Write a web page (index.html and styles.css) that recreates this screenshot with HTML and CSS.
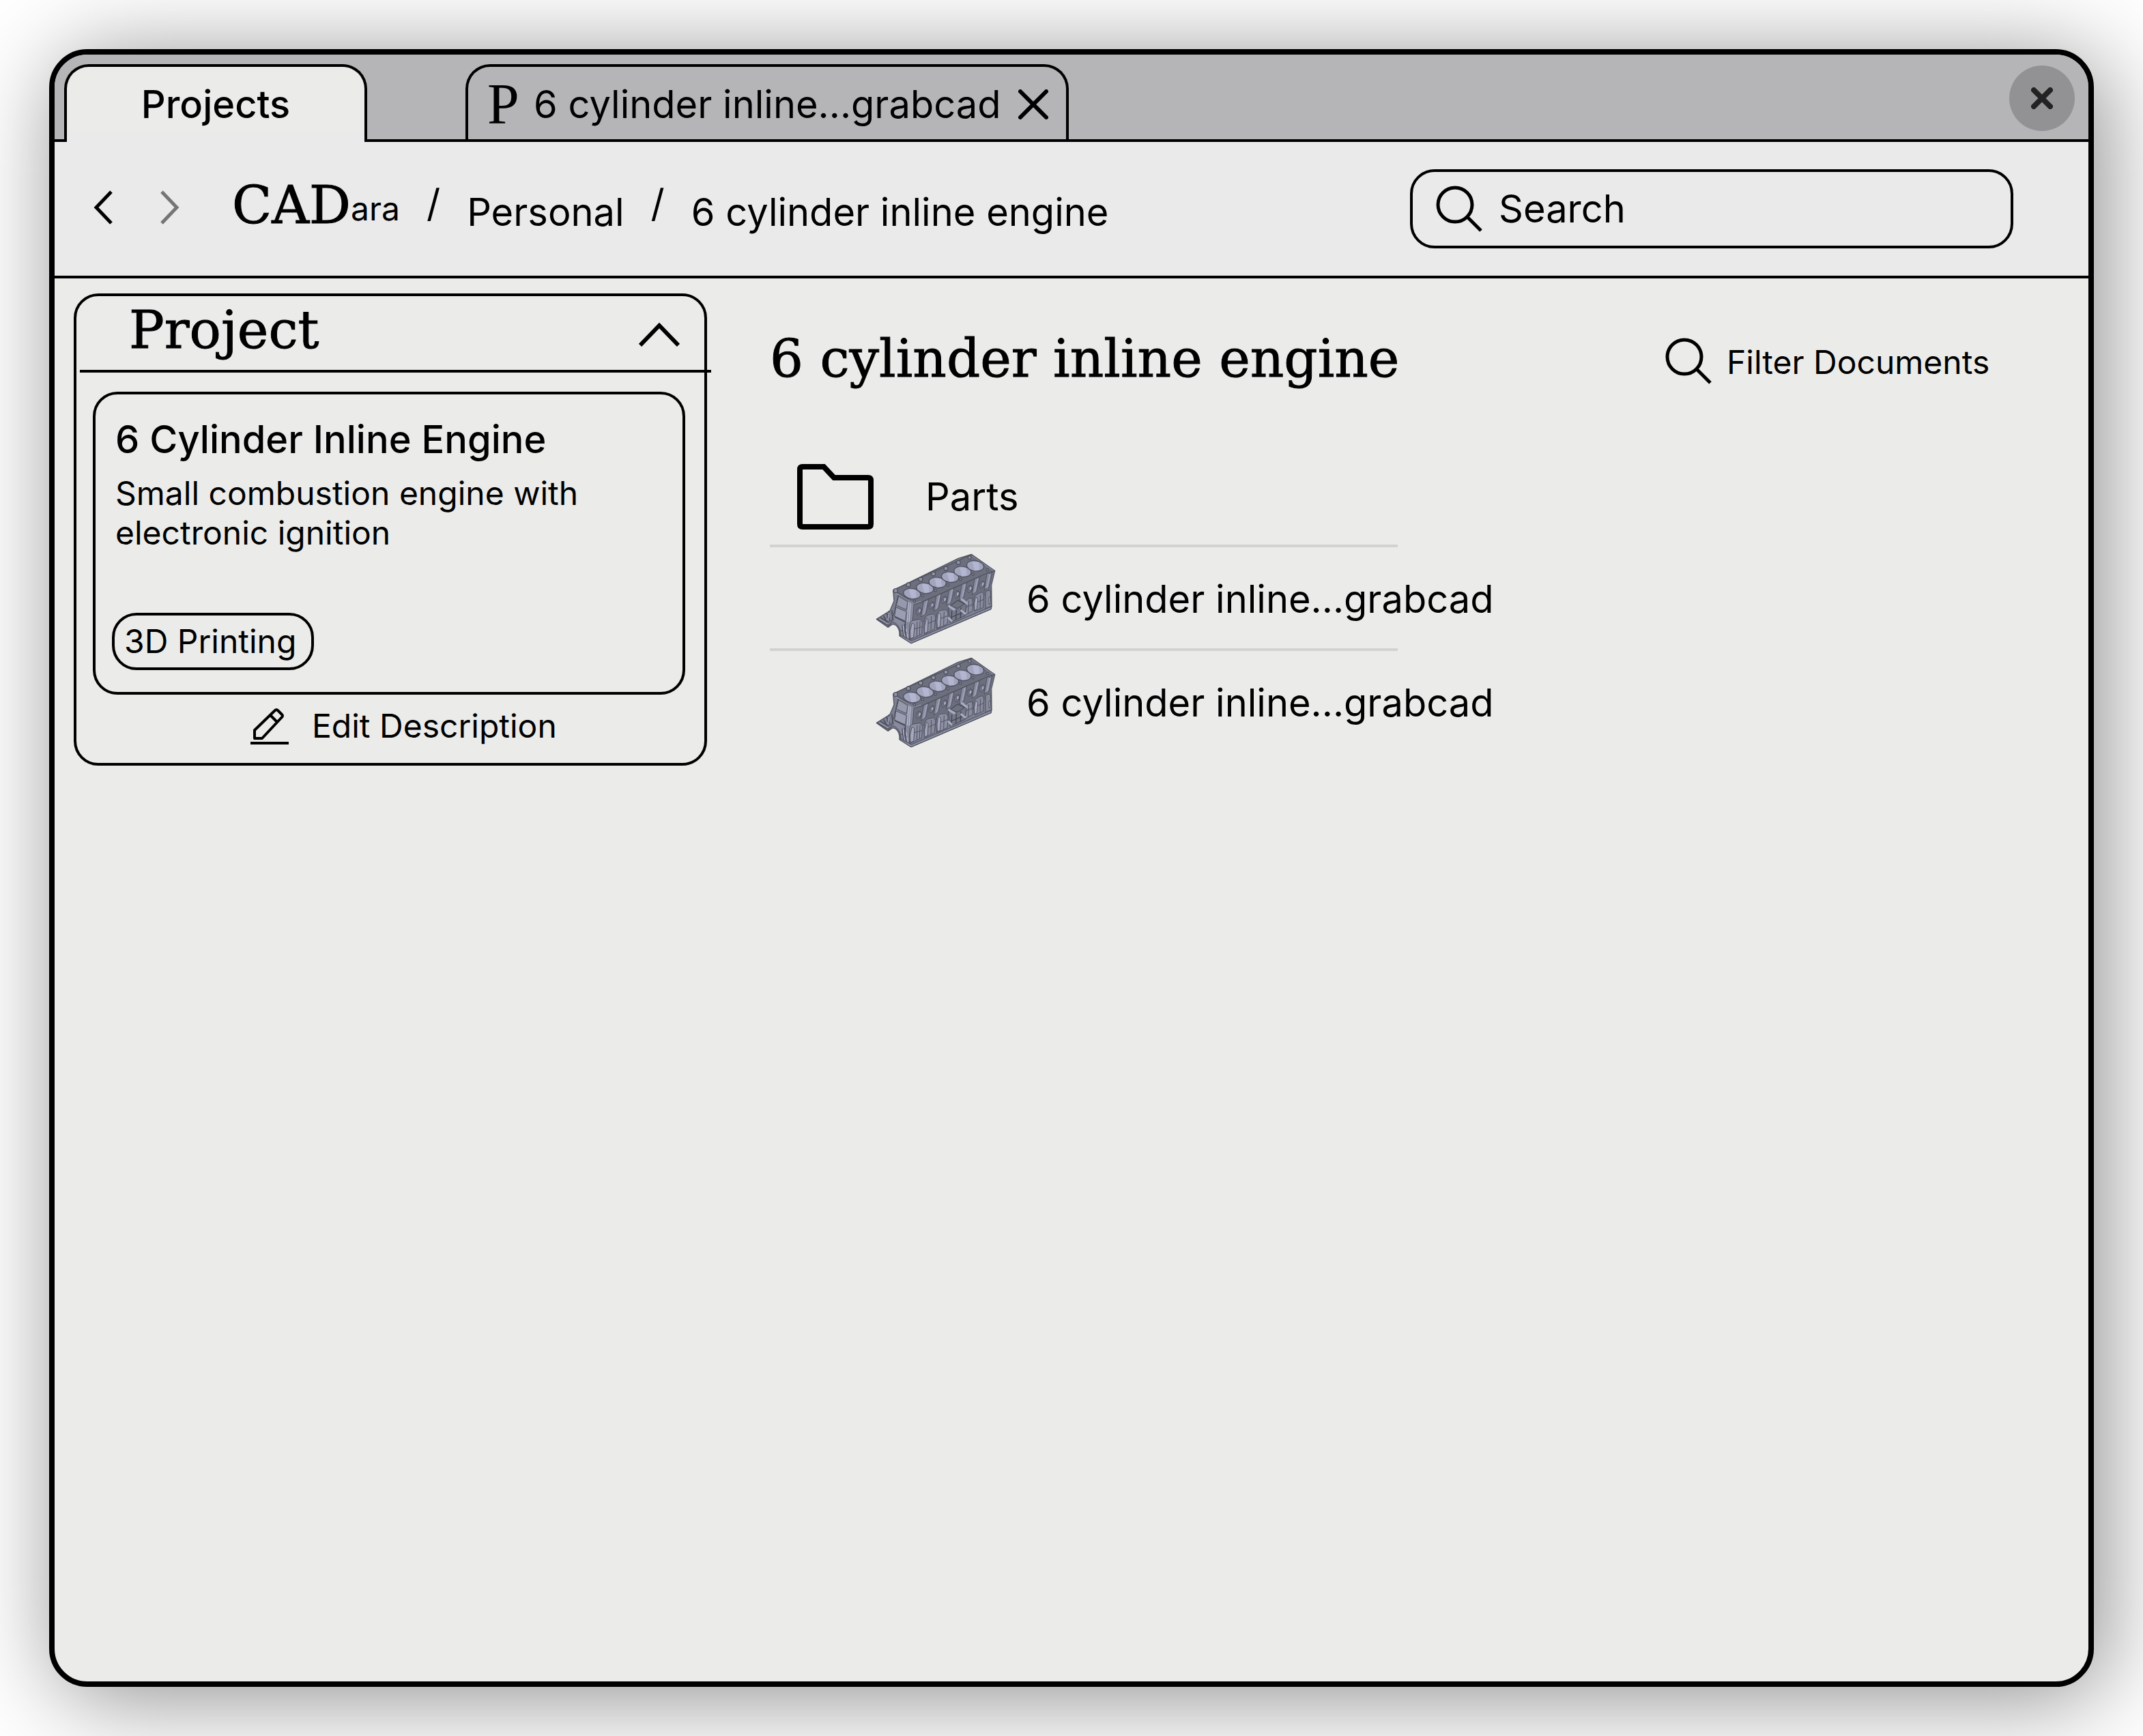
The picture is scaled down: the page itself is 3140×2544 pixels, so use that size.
FILE: index.html
```html
<!DOCTYPE html>
<html lang="en">
<head>
<meta charset="utf-8">
<meta name="viewport" content="width=device-width, initial-scale=1">
<title>CADara – 6 cylinder inline engine</title>
<link rel="stylesheet" href="styles.css">
</head>
<body>
<svg class="defs" aria-hidden="true">
  <symbol id="magnifier" viewBox="0 0 68 68">
    <circle cx="28" cy="28" r="25" fill="none" stroke="currentColor" stroke-width="5"/>
    <path d="M46 46L66 66" fill="none" stroke="currentColor" stroke-width="5"/>
  </symbol>
  <symbol id="engine" viewBox="66 66 534 402">
    <!-- body -->
    <path d="M73 355L132 318L150 275L146 228L432 88L490 70L593 143L578 205L579 300L574 312L225 461L174 428C176 396 160 376 142 378L124 391Z" fill="#7d8092" stroke="#50525f" stroke-width="4" stroke-linejoin="round"/>
    <!-- front face -->
    <path d="M168 248L238 286L232 360L215 452L180 425C180 392 160 366 138 368L152 320Z" fill="#888b9e" stroke="#484a57" stroke-width="3"/>
    <path d="M170 254L210 278L205 314L160 294Z" fill="#9699ac" stroke="#484a57" stroke-width="3"/>
    <path d="M158 302L205 322L200 364L152 342Z" fill="#9b9eb2" stroke="#484a57" stroke-width="3"/>
    <path d="M214 280L208 366M222 284L216 368" fill="none" stroke="#b9bcd2" stroke-width="4"/>
    <path d="M152 345L200 368L196 430" fill="none" stroke="#42444f" stroke-width="4"/>
    <path d="M78 355L126 383L138 372M90 348L128 370M104 340L118 368M116 328L134 366M128 318L120 350M140 316L146 362" fill="none" stroke="#4c4e5c" stroke-width="5"/>
    <path d="M84 354L124 378M126 326L124 360" fill="none" stroke="#b0b3c8" stroke-width="3"/>
    <path d="M186 380L192 436M196 376L204 440M182 404L210 418" stroke="#484a57" stroke-width="4"/>
    <path d="M190 384L196 430M204 398L210 436" stroke="#b4b7ce" stroke-width="4"/>
    <!-- base rail -->
    <path d="M176 424L226 450L576 300L578 310L225 461L176 430Z" fill="#8a8da1" stroke="#484a57" stroke-width="3"/>
    <!-- shaded band under the deck -->
    <path d="M240 290L592 144L578 205L576 240L232 390Z" fill="#6c6f7e"/>
    <!-- lower pods -->
    <g stroke="#50525f" stroke-width="3">
      <path d="M220 374Q222 362 236 360L262 356Q272 358 274 370L272 420L222 445Q214 420 220 374Z" fill="#8d90a3"/>
      <path d="M228 374Q238 372 240 384L236 434L222 442Q216 410 228 374Z" fill="#a6a9be"/>
      <path d="M252 366L250 430M264 364L262 424M240 398L274 388" fill="none"/>
      <path d="M284 356Q290 338 304 336L322 332Q332 336 332 350L328 398L284 420Q278 390 284 356Z" fill="#888b9e"/>
      <path d="M292 352Q300 350 300 362L298 410L284 418Q280 386 292 352Z" fill="#a3a6bb"/>
      <path d="M314 342L312 404M300 374L332 360" fill="none"/>
      <path d="M338 332Q342 318 358 316L376 314Q388 320 387 332L384 376L338 398Q332 370 338 332Z" fill="#8d90a3"/>
      <path d="M344 328Q354 326 356 340L352 388L340 394Q336 360 344 328Z" fill="#a6a9be"/>
      <path d="M370 322L368 382M356 352L386 340" fill="none"/>
      <path d="M462 284Q466 270 480 264L494 262L496 318L462 338Z" fill="#888b9e"/>
      <path d="M478 274L476 330M462 304L496 290" fill="none"/>
      <path d="M502 262Q506 248 522 242L536 236Q546 240 545 252L542 304L504 320Q496 290 502 262Z" fill="#888b9e"/>
      <path d="M508 260Q516 256 518 268L514 312L504 318Q500 284 508 260Z" fill="#a9acc1"/>
      <path d="M530 250L528 308M518 280L544 268" fill="none"/>
      <path d="M552 236Q564 224 574 232L577 298L552 308Z" fill="#868999"/>
      <path d="M566 262L572 256L574 284L568 290Z" fill="#b4b7ce"/>
    </g>
    <!-- diagonal ribs with their ports -->
    <g stroke="#50525f" stroke-width="3">
      <g id="rib">
        <path d="M282 264L304 258L290 330L268 346Z" fill="#888b9f"/>
        <path d="M296 266L280 336" stroke="#a5a8be" stroke-width="4"/>
        <circle cx="292" cy="264" r="8" fill="#9fa2b7"/>
        <ellipse cx="259" cy="320" rx="11" ry="16" transform="rotate(20 259 320)" fill="#777a8b"/>
        <ellipse cx="262" cy="318" rx="6" ry="10" transform="rotate(20 262 318)" fill="#a9acc2"/>
      </g>
      <use href="#rib" x="56" y="-25"/>
      <use href="#rib" x="112" y="-50"/>
      <use href="#rib" x="168" y="-74"/>
      <use href="#rib" x="224" y="-98"/>
      <use href="#rib" x="278" y="-117"/>
    </g>
    <!-- mount bracket -->
    <path d="M388 302L430 272L468 290L462 340L396 370Z" fill="#747788" stroke="#484a57" stroke-width="3"/>
    <path d="M398 296L430 273L460 288L428 308Z" fill="#6f7280" stroke="#42444f" stroke-width="3"/>
    <path d="M404 318L402 366M424 314L422 358M444 304L442 350M398 348L462 322" stroke="#42444f" stroke-width="4"/>
    <path d="M392 298L414 312M448 268L470 286M446 318L462 330M390 350L402 362" stroke="#a9acc2" stroke-width="10" stroke-linecap="round"/>
    <!-- deck -->
    <path d="M148 226L206 200L432 98L488 71L592 143L562 152L272 280L242 288Z" fill="#6c6f7d" stroke="#50525f" stroke-width="4" stroke-linejoin="round"/>
    <path d="M156 240L240 286L270 276" fill="none" stroke="#a2a5b8" stroke-width="3"/>
    <path d="M492 76L588 142" fill="none" stroke="#9699ab" stroke-width="3"/>
    <g fill="#9194a7" stroke="#50525f" stroke-width="4">
      <circle cx="157" cy="230" r="9"/><circle cx="213" cy="204" r="9"/><circle cx="267" cy="180" r="9"/>
      <circle cx="323" cy="156" r="9"/><circle cx="378" cy="132" r="9"/><circle cx="433" cy="106" r="9"/>
      <circle cx="482" cy="84" r="7"/>
      <circle cx="240" cy="276" r="5"/><circle cx="276" cy="252" r="5"/><circle cx="332" cy="229" r="5"/>
      <circle cx="387" cy="205" r="5"/><circle cx="442" cy="181" r="5"/><circle cx="497" cy="157" r="5"/><circle cx="560" cy="138" r="5"/>
    </g>
    <g fill="#a2a5bd" stroke="#50525f" stroke-width="4">
      <ellipse cx="229" cy="243" rx="38" ry="23" transform="rotate(8 229 243)"/>
      <ellipse cx="286" cy="219" rx="38" ry="23" transform="rotate(8 286 219)"/>
      <ellipse cx="341" cy="194" rx="38" ry="23" transform="rotate(8 341 194)"/>
      <ellipse cx="396" cy="170" rx="38" ry="23" transform="rotate(8 396 170)"/>
      <ellipse cx="451" cy="146" rx="38" ry="23" transform="rotate(8 451 146)"/>
      <ellipse cx="507" cy="121" rx="38" ry="23" transform="rotate(8 507 121)"/>
    </g>
    <g fill="#b3b6d0">
      <path d="M216 224L244 226L248 260L226 264Z"/><path d="M273 200L301 202L305 236L283 240Z"/>
      <path d="M328 175L356 177L360 211L338 215Z"/><path d="M383 151L411 153L415 187L393 191Z"/>
      <path d="M438 127L466 129L470 163L448 167Z"/><path d="M494 102L522 104L526 138L504 142Z"/>
    </g>
  </symbol>
</svg>

<div class="window">
  <header class="tab-bar">
    <div class="tab tab-active">
      <button class="tab-label" type="button">Projects</button>
    </div>
    <div class="tab tab-document">
      <span class="tab-badge">P</span>
      <button class="tab-label" type="button">6 cylinder inline...grabcad</button>
      <button class="tab-close" type="button" aria-label="Close tab">
        <svg width="44" height="44" viewBox="0 0 44 44"><path d="M3 3L41 41M41 3L3 41" stroke="currentColor" stroke-width="6" stroke-linecap="round"/></svg>
      </button>
    </div>
    <button class="window-close" type="button" aria-label="Close window">
      <svg width="32" height="32" viewBox="0 0 32 32"><path d="M4 4L28 28M28 4L4 28" stroke="currentColor" stroke-width="8" stroke-linecap="round"/></svg>
    </button>
  </header>

  <nav class="nav-bar">
    <div class="history">
      <button class="history-button" type="button" aria-label="Back">
        <svg width="48" height="52" viewBox="0 0 48 52"><path d="M35 3L13 26L35 49" fill="none" stroke="currentColor" stroke-width="5"/></svg>
      </button>
      <button class="history-button history-forward" type="button" aria-label="Forward">
        <svg width="48" height="52" viewBox="0 0 48 52"><path d="M13 3L35 26L13 49" fill="none" stroke="currentColor" stroke-width="5"/></svg>
      </button>
    </div>
    <div class="breadcrumb">
      <a class="brand" href="#"><span class="brand-main">CAD</span><span class="brand-suffix">ara</span></a>
      <span class="separator">/</span>
      <a class="crumb" href="#">Personal</a>
      <span class="separator">/</span>
      <a class="crumb" href="#">6 cylinder inline engine</a>
    </div>
    <label class="search">
      <svg width="68" height="68" aria-hidden="true"><use href="#magnifier"/></svg>
      <input class="search-input" type="text" placeholder="Search" aria-label="Search">
    </label>
  </nav>

  <main class="content">
    <aside class="panel">
      <div class="panel-header">
        <h2 class="panel-title">Project</h2>
        <button class="collapse" type="button" aria-label="Collapse">
          <svg width="60" height="36" viewBox="0 0 60 36"><path d="M2 33L30 4L58 33" fill="none" stroke="currentColor" stroke-width="6"/></svg>
        </button>
      </div>
      <section class="card">
        <h3 class="card-title">6 Cylinder Inline Engine</h3>
        <p class="card-text">Small combustion engine with electronic ignition</p>
        <span class="chip">3D Printing</span>
      </section>
      <button class="edit" type="button">
        <svg width="56" height="56" viewBox="0 0 56 56" fill="none" stroke="currentColor" stroke-width="4" stroke-linejoin="round">
          <path d="M6 46V34L36 5Q38 3 40 5L46 11Q48 13 46 15L17 46ZM29 12L39 22"/>
          <path d="M0 53H56"/>
        </svg>
        Edit Description
      </button>
    </aside>

    <section class="documents">
      <div class="documents-header">
        <h1 class="documents-title">6 cylinder inline engine</h1>
        <label class="filter">
          <svg width="68" height="68" aria-hidden="true"><use href="#magnifier"/></svg>
          <input class="filter-input" type="text" placeholder="Filter Documents" aria-label="Filter Documents">
        </label>
      </div>
      <ul class="list">
        <li class="row row-folder">
          <svg width="112" height="96" viewBox="0 0 112 96"><path d="M8 4H39L54 20H104Q108 20 108 24V88Q108 92 104 92H8Q4 92 4 88V8Q4 4 8 4Z" fill="none" stroke="currentColor" stroke-width="8"/></svg>
          <a class="row-link" href="#">Parts</a>
        </li>
        <li class="row row-file">
          <svg width="178" height="134" aria-hidden="true"><use href="#engine"/></svg>
          <a class="row-link" href="#">6 cylinder inline...grabcad</a>
        </li>
        <li class="row row-file">
          <svg width="178" height="134" aria-hidden="true"><use href="#engine"/></svg>
          <a class="row-link" href="#">6 cylinder inline...grabcad</a>
        </li>
      </ul>
    </section>
  </main>
</div>
</body>
</html>
```
FILE: styles.css
```css
:root {
  --ink: #000;
  --surface: #ebebe9;
  --nav: #eaeaea;
  --bar: #b5b5b7;
  --rule: #d2d2d0;
  --sans: Inter, "Liberation Sans", sans-serif;
  --serif: "DejaVu Serif", serif;
}

* {
  box-sizing: border-box;
}

body {
  margin: 0;
  min-height: 100vh;
  padding: 72px;
  display: flex;
  background: #fff;
  color: var(--ink);
  font: 400 56px/68px var(--sans);
}

h1, h2, h3, p, ul {
  margin: 0;
  padding: 0;
  font-weight: 400;
}

a {
  color: inherit;
  text-decoration: none;
}

button, input {
  margin: 0;
  padding: 0;
  border: 0;
  background: none;
  color: inherit;
  font: inherit;
}

button {
  cursor: pointer;
}

svg {
  display: block;
  flex: none;
}

.defs {
  position: absolute;
  width: 0;
  height: 0;
}

.window {
  flex: 1;
  min-width: 0;
  display: flex;
  flex-direction: column;
  overflow: hidden;
  border: 8px solid var(--ink);
  border-radius: 56px;
  background: var(--surface);
  box-shadow: 14px 14px 140px rgba(0, 0, 0, 0.46);
}

/* Tab bar */

.tab-bar {
  display: flex;
  height: 128px;
  padding: 14px 20px 0 14px;
  gap: 144px;
  border-bottom: 4px solid var(--ink);
  background: var(--bar);
}

.tab {
  display: flex;
  align-items: center;
  padding-top: 4px;
  border: 4px solid var(--ink);
  border-bottom: 0;
  border-radius: 36px 36px 0 0;
  white-space: nowrap;
}

.tab-active {
  width: 444px;
  margin-bottom: -4px;
  padding-top: 0;
  justify-content: center;
  background: linear-gradient(var(--surface) 94px, var(--nav) 94px);
  font-weight: 500;
}

.tab-document {
  padding-right: 26px;
  padding-left: 28px;
}

.tab-badge {
  width: 68px;
  font-family: "Liberation Serif", serif;
  font-size: 84px;
}

.tab-close {
  margin-left: 26px;
}

.window-close {
  display: grid;
  place-items: center;
  width: 96px;
  height: 96px;
  margin-top: 2px;
  margin-left: auto;
  border-radius: 50%;
  background: #929294;
  color: #222;
}

/* Navigation bar */

.nav-bar {
  display: flex;
  align-items: center;
  height: 200px;
  padding: 0 110px 0 48px;
  border-bottom: 4px solid var(--ink);
  background: var(--nav);
}

.history {
  display: flex;
  gap: 48px;
  padding-bottom: 4px;
}

.history-forward {
  color: #757575;
}

.breadcrumb {
  display: flex;
  align-items: center;
  gap: 39px;
  margin-left: 68px;
  white-space: nowrap;
}

.brand {
  display: flex;
  align-items: center;
}

.brand-main {
  padding-bottom: 10px;
  font-family: var(--serif);
  font-size: 76px;
}

.brand-suffix {
  font-size: 48px;
}

.brand-main,
.panel-title,
.documents-title {
  -webkit-text-stroke: 1px currentColor;
}

.separator {
  padding-bottom: 16px;
}

.crumb {
  padding-top: 10px;
}

.search {
  display: flex;
  align-items: center;
  gap: 24px;
  width: 884px;
  height: 116px;
  margin-left: auto;
  padding: 0 32px 0 34px;
  border: 4px solid var(--ink);
  border-radius: 36px;
}

.search-input {
  flex: 1;
  min-width: 0;
}

::placeholder {
  color: var(--ink);
  opacity: 1;
}

/* Page content */

.content {
  flex: 1;
  display: flex;
  align-items: flex-start;
  gap: 92px;
  padding: 22px 110px 28px 28px;
}

.panel {
  flex: none;
  width: 928px;
  border: 4px solid var(--ink);
  border-radius: 36px;
}

.panel-header {
  display: flex;
  align-items: center;
  justify-content: space-between;
  height: 112px;
  margin-right: -10px;
  margin-left: 5px;
  padding: 0 46px 0 72px;
  border-bottom: 4px solid var(--ink);
}

.panel-title {
  padding-bottom: 8px;
  font-family: var(--serif);
  font-size: 77px;
}

.collapse {
  padding-top: 6px;
}

.card {
  margin: 28px 28px 0 24px;
  padding: 32px 24px;
  border: 4px solid var(--ink);
  border-radius: 36px;
}

.card-title {
  padding-left: 5px;
  font-size: 56px;
  font-weight: 500;
}

.card-text {
  max-width: 720px;
  margin: 16px 0 88px;
  padding-left: 5px;
  font-size: 48px;
  line-height: 58px;
}

.chip {
  display: inline-block;
  vertical-align: top;
  width: 296px;
  padding: 0 14px;
  border: 4px solid var(--ink);
  border-radius: 36px;
  font-size: 48px;
  line-height: 76px;
  white-space: nowrap;
}

.edit {
  display: flex;
  align-items: center;
  gap: 34px;
  height: 100px;
  margin-left: 255px;
  padding-bottom: 8px;
  font-size: 48px;
}

.documents {
  flex: 1;
  min-width: 0;
  padding-top: 52px;
}

.documents-header {
  display: flex;
  align-items: center;
  justify-content: space-between;
  height: 88px;
}

.documents-title {
  font-family: var(--serif);
  font-size: 77px;
  white-space: nowrap;
}

.filter {
  display: flex;
  align-items: center;
  gap: 22px;
  padding-top: 10px;
  font-size: 48px;
}

.filter svg {
  margin-bottom: 4px;
}

.filter-input {
  width: 420px;
}

.list {
  max-width: 920px;
  margin-top: 80px;
  list-style: none;
}

.row {
  display: flex;
  align-items: center;
  height: 152px;
  border-bottom: 4px solid var(--rule);
  white-space: nowrap;
}

.row:last-child {
  border-bottom-color: transparent;
}

.row-folder {
  gap: 76px;
  padding-top: 8px;
  padding-left: 40px;
}

.row-file {
  gap: 44px;
  padding-top: 4px;
  padding-left: 154px;
}
```
